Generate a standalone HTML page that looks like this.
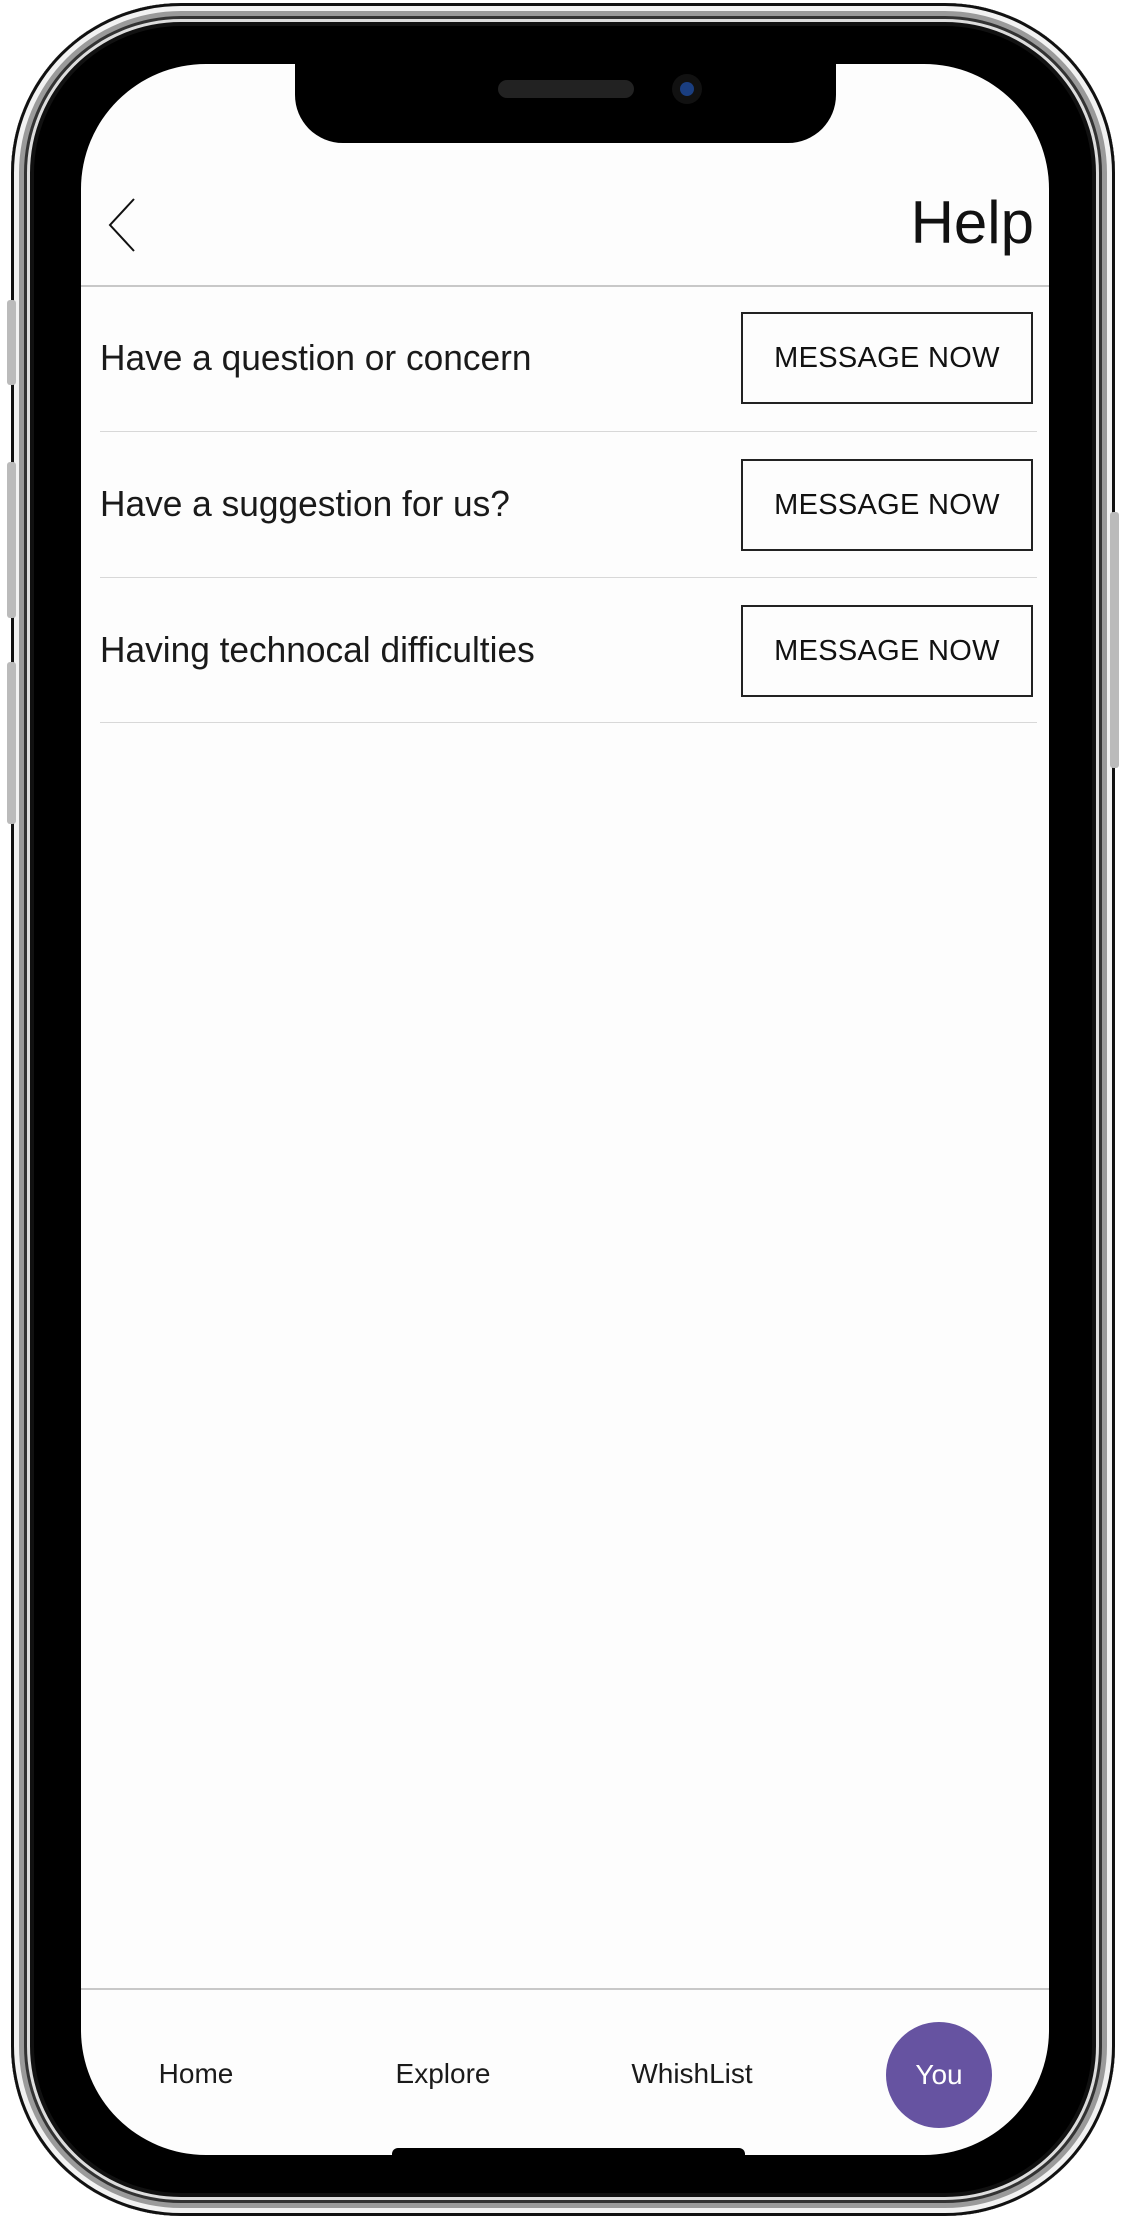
<!DOCTYPE html>
<html><head><meta charset="utf-8"><style>
*{margin:0;padding:0;box-sizing:border-box}
body{width:1125px;height:2220px;background:#fff;position:relative;overflow:hidden;font-family:"Liberation Sans",sans-serif;color:#111}
.abs{position:absolute}
.body{left:11px;top:3px;width:1104px;height:2213px;border-radius:170px;background:#000;box-shadow:inset 0 0 0 3px #111,inset 0 0 0 8px #f2f2f2,inset 0 0 0 13px #9a9a9a,inset 0 0 0 16px #333,inset 0 0 0 19px #ddd,inset 0 0 0 23px #111}
.screen{left:81px;top:64px;width:968px;height:2091px;border-radius:125px;background:#fdfdfd;overflow:hidden}
.notch{left:295px;top:40px;width:541px;height:103px;background:#000;border-radius:0 0 48px 48px}
.btn{left:745px;width:292px;height:92px;border:2px solid #222;font-size:29px;display:flex;align-items:center;justify-content:center;letter-spacing:0.3px;color:#111}
.row{left:100px;font-size:36px;line-height:40px;color:#1a1a1a;transform:scaleX(0.98);transform-origin:left}
.sep{left:100px;width:937px;height:1px;background:#d8d8d8}
.tab{top:2056px;font-size:28px;transform:translateX(-50%);line-height:36px;color:#1a1a1a}
.side{background:#bbb;border-radius:3px}
</style></head><body>
<div class="abs body"></div>
<div class="abs side" style="left:7px;top:300px;width:9px;height:85px"></div>
<div class="abs side" style="left:7px;top:462px;width:9px;height:156px"></div>
<div class="abs side" style="left:7px;top:662px;width:9px;height:162px"></div>
<div class="abs side" style="left:1110px;top:512px;width:9px;height:256px"></div>
<div class="abs screen"></div>
<div class="abs notch"></div>
<div class="abs" style="left:498px;top:80px;width:136px;height:18px;border-radius:9px;background:#222"></div>
<div class="abs" style="left:672px;top:74px;width:30px;height:30px;border-radius:50%;background:#111"><div style="margin:8px;width:14px;height:14px;border-radius:50%;background:#1a3e80"></div></div>
<svg class="abs" style="left:100px;top:195px" width="40" height="60"><path d="M34 4 L10 30 L34 56" fill="none" stroke="#111" stroke-width="2"/></svg>
<div class="abs" style="right:91px;top:188px;font-size:60px;line-height:70px;color:#111">Help</div>
<div class="abs" style="left:81px;top:285px;width:968px;height:2px;background:#c8c8c8"></div>
<div class="abs row" style="top:338px">Have a question or concern</div>
<div class="abs btn" style="top:312px;left:741px">MESSAGE NOW</div>
<div class="abs sep" style="top:431px"></div>
<div class="abs row" style="top:484px">Have a suggestion for us?</div>
<div class="abs btn" style="top:459px;left:741px">MESSAGE NOW</div>
<div class="abs sep" style="top:577px"></div>
<div class="abs row" style="top:630px">Having technocal difficulties</div>
<div class="abs btn" style="top:605px;left:741px">MESSAGE NOW</div>
<div class="abs sep" style="top:722px"></div>
<div class="abs" style="left:81px;top:1988px;width:968px;height:2px;background:#c8c8c8"></div>
<div class="abs tab" style="left:196px">Home</div>
<div class="abs tab" style="left:443px">Explore</div>
<div class="abs tab" style="left:692px">WhishList</div>
<div class="abs" style="left:886px;top:2022px;width:106px;height:106px;border-radius:50%;background:#6653a1;color:#fff;font-size:28px;display:flex;align-items:center;justify-content:center">You</div>
<div class="abs" style="left:392px;top:2148px;width:353px;height:14px;background:#000;border-radius:6px"></div>
</body></html>
